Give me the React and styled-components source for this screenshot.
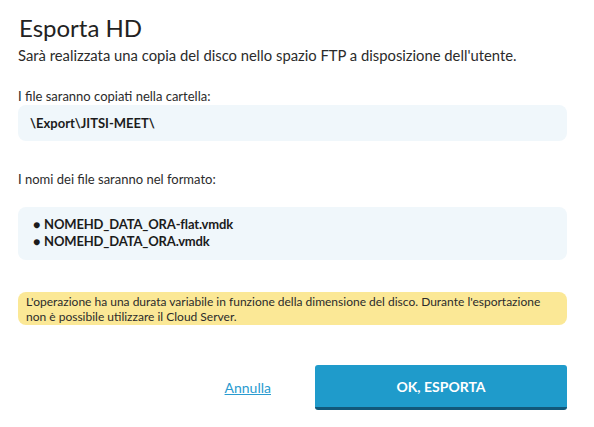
import React from "react";
import styled, { createGlobalStyle } from "styled-components";

const GlobalStyle = createGlobalStyle`
  body {
    margin: 0;
    background: #fff;
    font-family: Lato, "Liberation Sans", sans-serif;
    color: #2b2b2b;
  }
`;

const Dialog = styled.div`
  width: 594px;
  height: 427px;
  box-sizing: border-box;
  padding: 13px 27px 0 18px;
  display: flex;
  flex-direction: column;
`;

const Title = styled.h2`
  margin: 0 0 0 1px;
  font-size: 24px;
  font-weight: 400;
  line-height: 30px;
  color: #222;
`;

const Text = styled.p`
  margin: ${(p) => p.$m || "0"};
  font-size: ${(p) => p.$size || "13px"};
  line-height: 17px;
`;

const InfoBox = styled.div`
  background: #f0f7fb;
  border-radius: 8px;
  padding: ${(p) => p.$pad || "9px 12px"};
  font-size: 13px;
  font-weight: 700;
  line-height: 16px;
  color: #1c1c1c;
`;

const List = styled.ul`
  margin: 0;
  padding: 0;
  list-style: none;
`;

const Item = styled.li`
  letter-spacing: -0.15px;

  &::before {
    content: "●";
    font-size: 12px;
    margin-right: 4px;
  }
`;

const Warning = styled.div`
  margin-top: 32px;
  background: #fbe896;
  border-radius: 8px;
  padding: 2px 8px 1px 8px;
  font-size: 12px;
  line-height: 15px;
  color: #2b2b2b;
  white-space: nowrap;
`;

const Actions = styled.div`
  margin-top: 40px;
  display: flex;
  justify-content: flex-end;
  align-items: center;
  gap: 44px;
`;

const CancelLink = styled.a`
  font-size: 14px;
  color: #2a9bd0;
  text-decoration: underline;
  cursor: pointer;
`;

const PrimaryButton = styled.button`
  width: 252px;
  height: 45px;
  border: none;
  border-bottom: 3px solid #12587a;
  border-radius: 3px;
  background: #1f9bcb;
  color: #fff;
  font-family: Lato, "Liberation Sans", sans-serif;
  font-size: 14px;
  font-weight: 700;
  cursor: pointer;
  padding: 0;
`;

export default function App() {
  return (
    <>
      <GlobalStyle />
      <Dialog>
        <Title>Esporta HD</Title>
        <Text $m="4px 0 0 0" $size="14.8px">
          Sarà realizzata una copia del disco nello spazio FTP a disposizione dell'utente.
        </Text>
        <Text $m="24px 0 0 0">I file saranno copiati nella cartella:</Text>
        <InfoBox $pad="10px 12px 10px 12px">\Export\JITSI-MEET\</InfoBox>
        <Text $m="30px 0 19px 0">I nomi dei file saranno nel formato:</Text>
        <InfoBox $pad="9px 15px 10px 15px">
          <List>
            <Item>NOMEHD_DATA_ORA-flat.vmdk</Item>
            <Item>NOMEHD_DATA_ORA.vmdk</Item>
          </List>
        </InfoBox>
        <Warning>
          L'operazione ha una durata variabile in funzione della dimensione del disco. Durante l'esportazione
          <br />
          non è possibile utilizzare il Cloud Server.
        </Warning>
        <Actions>
          <CancelLink>Annulla</CancelLink>
          <PrimaryButton>OK, ESPORTA</PrimaryButton>
        </Actions>
      </Dialog>
    </>
  );
}
